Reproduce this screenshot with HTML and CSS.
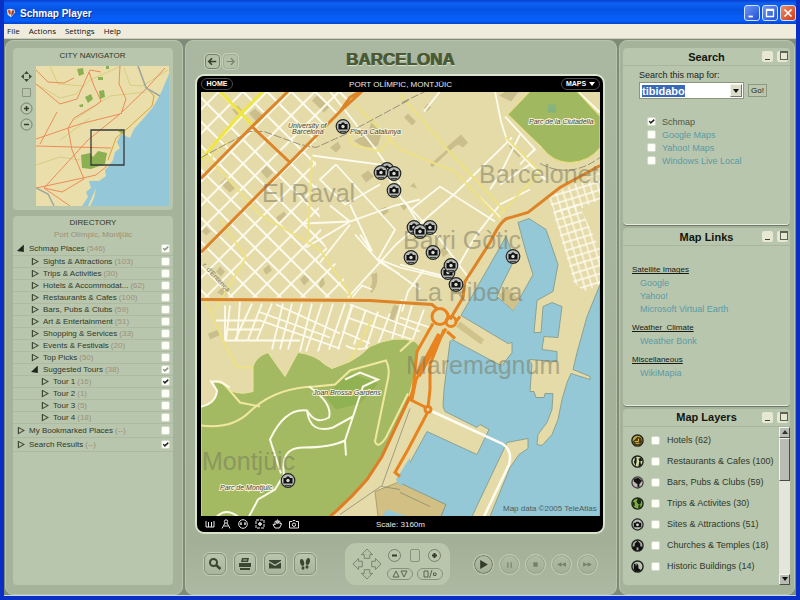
FILE: index.html
```
<!DOCTYPE html>
<html lang="en">
<head>
    <meta charset="UTF-8">
    <title>Schmap Player</title>
    <meta name="viewport" content="width=device-width, initial-scale=1">
    <link rel="stylesheet" href="styles.css">
</head>
<body>
    <header class="titlebar">
        <svg class="app-icon" viewBox="0 0 12 12"><path d="M1 2L5 1L10 2L11 5L6 11L2 8Z" fill="#f3e9e2"/><path d="M2 3L5 2L6 7L4 8Z" fill="#c8452b"/><path d="M7 3L10 3L9 7L6 10Z" fill="#8d3a2c"/></svg>
        <h1>Schmap Player</h1>
        <div class="window-buttons">
            <button type="button" aria-label="Minimize"><svg viewBox="0 0 16 16"><path d="M4 11H9V13H4Z" fill="#fff"/></svg></button>
            <button type="button" aria-label="Maximize"><svg viewBox="0 0 16 16"><path d="M4 4H12V12H4Z M4 5H12" fill="none" stroke="#fff" stroke-width="1.5"/></svg></button>
            <button type="button" class="close" aria-label="Close"><svg viewBox="0 0 16 16"><path d="M4 4L12 12M12 4L4 12" stroke="#fff" stroke-width="2"/></svg></button>
        </div>
    </header>
    <nav class="menubar">
        <button type="button">File</button>
        <button type="button">Actions</button>
        <button type="button">Settings</button>
        <button type="button">Help</button>
    </nav>

    <main class="workspace">
        <aside class="panel left">
            <section class="box navigator">
                <h2>CITY NAVIGATOR</h2>
                <div class="nav-body">
                    <div class="nav-tools">
                        <button type="button" aria-label="Pan"><svg viewBox="0 0 13 13"><path d="M6.5 1L9 4H4ZM6.5 12L9 9H4ZM1 6.5L4 4V9ZM12 6.5L9 4V9Z" fill="#3f4a37"/><circle cx="6.500" cy="6.500" r="2.500" fill="#b8c6ad"/></svg></button>
                        <button type="button" aria-label="Fit"><svg viewBox="0 0 13 13"><path d="M2.500 2.500H10.500V10.500H2.500Z" fill="none" stroke="#8b9680"/></svg></button>
                        <button type="button" aria-label="Zoom in"><svg viewBox="0 0 13 13"><circle cx="6.500" cy="6.500" r="5.500" fill="#bcc9b1" stroke="#75806a"/><path d="M4 6.500H9M6.500 4V9" stroke="#323c2b" stroke-width="1.500"/></svg></button>
                        <button type="button" aria-label="Zoom out"><svg viewBox="0 0 13 13"><circle cx="6.500" cy="6.500" r="5.500" fill="#bcc9b1" stroke="#75806a"/><path d="M4 6.500H9" stroke="#323c2b" stroke-width="1.500"/></svg></button>
                    </div>
                    <svg class="minimap" viewBox="36 66 133 140">
                        <rect x="36" y="66" width="133" height="140" fill="#eadfaa"/>
                        <path d="M169 74L160 95L153 107L143 119L134 129L130 138L121 134L117 142L120 148L115 152L113 160L108 167L105 170L106 176L99 181L89 181L91 188L86 192L88 197L82 206H88L96 188L94 198L90 206H169Z" fill="#94c8d8"/>
                        <g fill="#8caf52">
                            <path d="M81 155L90 153L93 157L98 151L107 153L105 164L91 169L82 168Z"/>
                            <path d="M77 69L83 68L84 74L79 76ZM85 97L91 94L93 99L88 103ZM99 91L104 90L105 97L100 99ZM106 66H109V69H106ZM98 77H103V80H98ZM79 105L83 104V107H80ZM118 131L123 130L124 135Z"/>
                        </g>
                        <g fill="none" stroke="#c9bf68" opacity=".6">
                            <path d="M36 84L60 98L76 94L90 80L121 66M36 165L60 157L80 160M50 66L58 84L83 86M124 68L130 85L142 86L168 70M74 120L110 96L146 92M60 140L90 118"/>
                        </g>
                        <g fill="none" stroke="#ec8b58">
                            <path d="M36 139L80 124L120 114L147 88L165 68"/>
                            <path d="M44 188L88 140L120 114M36 146L111 148M36 188L83 178L96 175L107 166"/>
                            <path d="M36 84L60 104L77 99L90 70L101 72M70 206L44 188L62 192L84 179L72 150L68 128L74 118L96 105L101 101L94 86L89 72M40 144L57 112M120 66L119 84L126 99L121 114M36 70L48 82L64 83L74 78"/>
                            <path d="M138 66L146 87L154 96L152 106L128 128L116 138L108 160" stroke="#d9a33a"/>
                        </g>
                        <path d="M138 66L146 88L160 96M36 188L48 194L54 206" fill="none" stroke="#9ba8a0" stroke-width="1.500"/>
                        <path d="M91 130H124V165H91Z" fill="none" stroke="#35383a" stroke-width="1.300"/>
                    </svg>
                </div>
            </section>

            <section class="box directory">
                <h2>DIRECTORY</h2>
                <p class="place">Port Olímpic, Montjüic</p>
                <ul class="tree">
                    <li class="top first"><label><i class="open"></i>Schmap Places <span>(546)</span><input type="checkbox" class="dim" checked></label></li>
                    <li class="sub"><label><i></i>Sights &amp; Attractions <span>(103)</span><input type="checkbox"></label></li>
                    <li class="sub"><label><i></i>Trips &amp; Activities <span>(30)</span><input type="checkbox"></label></li>
                    <li class="sub"><label><i></i>Hotels &amp; Accommodat... <span>(62)</span><input type="checkbox"></label></li>
                    <li class="sub"><label><i></i>Restaurants &amp; Cafes <span>(100)</span><input type="checkbox"></label></li>
                    <li class="sub"><label><i></i>Bars, Pubs &amp; Clubs <span>(59)</span><input type="checkbox"></label></li>
                    <li class="sub"><label><i></i>Art &amp; Entertainment <span>(51)</span><input type="checkbox"></label></li>
                    <li class="sub"><label><i></i>Shopping &amp; Services <span>(33)</span><input type="checkbox"></label></li>
                    <li class="sub"><label><i></i>Events &amp; Festivals <span>(20)</span><input type="checkbox"></label></li>
                    <li class="sub"><label><i></i>Top Picks <span>(50)</span><input type="checkbox"></label></li>
                    <li class="sub"><label><i class="open"></i>Suggested Tours <span>(38)</span><input type="checkbox" class="dim" checked></label></li>
                    <li class="tour"><label><i></i>Tour 1 <span>(16)</span><input type="checkbox" checked></label></li>
                    <li class="tour"><label><i></i>Tour 2 <span>(1)</span><input type="checkbox"></label></li>
                    <li class="tour"><label><i></i>Tour 3 <span>(5)</span><input type="checkbox"></label></li>
                    <li class="tour"><label><i></i>Tour 4 <span>(18)</span><input type="checkbox"></label></li>
                    <li class="top"><label><i></i>My Bookmarked Places <span>(--)</span><input type="checkbox"></label></li>
                    <li class="top"><label><i></i>Search Results <span>(--)</span><input type="checkbox" checked></label></li>
                </ul>
            </section>
        </aside>

        <section class="panel center">
            <div class="city-bar">
                <div class="history">
                    <button type="button" aria-label="Back"><svg viewBox="0 0 14 14"><path d="M11 7H3M6.500 3.500L3 7L6.500 10.500" fill="none" stroke="#35402c" stroke-width="1.700"/></svg></button>
                    <button type="button" class="off" aria-label="Forward"><svg viewBox="0 0 14 14"><path d="M3 7H11M7.500 3.500L11 7L7.500 10.500" fill="none" stroke="#78846c" stroke-width="1.300"/></svg></button>
                </div>
                <h2>BARCELONA</h2>
            </div>

            <div class="map-frame">
                <div class="map-head">
                    <button type="button" class="pill">HOME</button>
                    <span>PORT OLÍMPIC, MONTJÜIC</span>
                    <button type="button" class="pill">MAPS <i></i></button>
                </div>
                <svg class="map" viewBox="201 92 399 425" preserveAspectRatio="xMidYMid slice">
                    <defs>
                        <pattern id="blocks" width="17" height="17" patternUnits="userSpaceOnUse" patternTransform="translate(255 295) rotate(45)">
                            <path d="M1 0V17M0 1H17" stroke="#fdfbee" stroke-width="1.900"/>
                        </pattern>
                        <pattern id="blocks-small" width="7" height="8" patternUnits="userSpaceOnUse" patternTransform="translate(560 210) rotate(-17)">
                            <path d="M1 0V8M0 1H7" stroke="#fdfbee" stroke-width="1.300"/>
                        </pattern>
                        <g id="pin">
                            <circle r="6.800" fill="#b9bcb8" stroke="#222622" stroke-width="1.200"/>
                            <path d="M-4.500 -2.500H-2L-1 -4H1L2 -2.500H4.500V3H-4.500Z" fill="#111"/>
                            <circle r="1.700" fill="#d8dad6"/>
                            <path d="M-3 5H3" stroke="#444" stroke-width="1.200"/>
                        </g>
                    </defs>
                    <rect x="201" y="92" width="399" height="425" fill="#e5dba9"/>

                    <!-- building blocks -->
                    <g fill="#cabf8c">
                        <path d="M249 114L255 109L266 119L259 125ZM312 101L317 96L330 107L324 113ZM260 171L266 166L273 173L267 179ZM220 184L226 178L236 188L230 193ZM232 110L238 106L242 111L237 116ZM354 141Q366 152 378 146L382 132L372 120L368 134ZM361 176L368 171L374 177L366 183ZM276 218L284 212L287 216L279 223ZM263 270L269 265L272 271L266 275ZM300 280L306 274L310 280L304 286ZM216 272L220 267L225 272L221 277ZM217 293L222 288L228 293L224 297ZM208 334L219 330L221 335L210 340ZM202 232L206 227L211 232L206 236Z"/>
                        <path d="M404 118L408 114L416 122L412 126ZM424 108L428 104L431 108L427 112ZM446 148L461 135L468 143L463 148L458 145L449 152ZM430 165L447 150L449 152L432 168ZM499 96L506 92H519L511 102ZM511 144L522 155L519 158L509 147ZM410 187L414 183L417 189ZM388 320L394 305L399 307L393 323ZM371 275L377 273Q379 287 371 294L370 289Q374 281 371 275ZM330 148L338 142L341 148L336 153ZM440 250L446 247L449 253L443 258ZM400 206L405 202L408 207L404 211ZM319 284L323 277L325 284L320 290ZM380 210L386 207L389 212L383 216Z"/>
                    </g>

                    <!-- streets -->
                    <path d="M201 92H352L336 116L316 136V180L322 240L348 287V298H201Z" fill="url(#blocks)"/>
                    <path d="M553 213L578 203L600 250V285L584 292L574 283Z" fill="url(#blocks-small)"/>
                    <path d="M548 198L562 190L600 173V200L575 212L556 216Z" fill="url(#blocks-small)"/>
                    <g fill="none" stroke="#fdfbee" stroke-width="1.800">
                        <path d="M312 156L380 165L402 200L440 240L470 280M330 92L376 150L400 185M336 165L320 180L345 205L380 185M336 165L395 230L378 260L420 290M304 224L350 222L395 206L420 200M350 222L330 206M350 222L306 248M350 205L372 252M355 235L379 262L400 275M320 263L350 225M372 252L360 235M379 260L400 268L470 285"/>
                        <path d="M348 298L396 245L455 194L512 138M372 290L362 286L352 298M440 92L424 112M495 92L501 122L507 141L546 180M505 117L535 150L524 160M510 114L542 148M520 135L500 175L490 190M534 150L520 165M480 198L500 218M500 185L530 165L545 180M400 265L425 272L450 278M411 210L440 187L495 222M403 200L424 232M455 272L476 236L500 205L530 190M545 120L558 112M578 92L600 113"/>
                        <path d="M230 306L226 341H300M240 302L237 341M252 304L235 341M262 304L248 340M272 304L257 340M283 304L272 350M292 304L280 350M302 304L288 350M312 304L300 352M322 304L306 352M333 304L318 352M345 304L329 350M353 305L338 350M216 321H260L340 349M228 330H262M258 312L330 338M276 305L340 334M225 306V341"/>
                        <path d="M350 305L420 332M347 318L412 340M342 332L370 344M346 346Q355 352 368 348M352 305L344 330M366 310L354 345M378 312L366 348M390 314L378 345M402 300L392 340M412 306L402 339M424 310L412 342M400 318L430 328"/>
                        <path d="M402 312L408 292L424 270"/>
                    </g>
                    <g fill="none" stroke="#efe23c" stroke-width="3">
                        <path d="M220 92L252 125M201 160L240 115L263 92" stroke="#f0e640"/>
                    </g>
                    <g fill="none" stroke="#ede182" stroke-width="2">
                        <path d="M355 105L400 150L455 172L500 220M312 156L308 240M201 150L260 215L320 250L352 298M400 95L450 153L505 212M345 120L352 145L380 152L398 130M201 168L230 140M506 138L540 172L500 215M206 302L225 345L237 368H253M214 312L246 258L220 220M350 362L372 320"/>
                    </g>

                    <!-- parks -->
                    <path d="M530 92L508 115L542 148Q553 163 570 163Q590 162 600 148V117L577 92Z" fill="#a0b961" stroke="#e9df72"/>
                    <path d="M548 105H556V113H548Z" fill="#85b380"/>
                    <path d="M253 392V367Q256 357 268 353L285 377L298 353Q315 355 325 365L332 369L350 362Q360 357 370 347Q395 335 415 342L420 347L412 385L408 400L382 457Q370 480 330 517H201V408Q216 402 217 392L213 382L222 384Q234 398 253 392Z" fill="#a3ba63" stroke="#ece3a0"/>
                    <path d="M324 396L345 378L352 374L378 384L360 404L336 410Z" fill="#91b253"/>

                    <g fill="none" stroke="#f2e7a0" stroke-width="2">
                        <path d="M201 426Q232 430 250 412Q275 388 315 387L335 385L350 371L386 361Q391 370 387 384L375 442Q378 450 386 438L408 394"/>
                        <path d="M222 382L240 403L260 407"/>
                        <path d="M413 340L400 352"/>
                    </g>
                    <g fill="none" stroke="#fcfbe9" stroke-width="2">
                        <path d="M309 387Q333 404 329 418Q316 426 307 411Q285 408 270 440L281 474M307 411Q310 435 333 428L353 417L363 387L378 380L360 373L345 380M353 417L345 441L346 456M345 441Q331 448 303 448Q280 448 284 475L275 490L258 500L249 517M217 517Q226 508 238 517"/>
                        <path d="M201 407Q216 404 217 391L211 382L220 382L230 388"/>
                    </g>

                    <!-- harbour -->
                    <path d="M375 492L400 482L446 505L441 517H378Z" fill="#d1bf84" stroke="#9b8c5a" stroke-width=".7"/>
                    <path d="M506 237L461 316L508 344L512 343L512 353L502 366L497 364L452 340L450 342L444 390L443 407L445 412L477 428L480 425L489 430L477 455L427 432L399 483L446 505L441 517H472L507 443L528 439L528 449L519 455L510 468L490 517H600V285L587 317L577 353L573 370L590 377L590 380L571 374L567 383L562 400L558 420L552 435L542 446L537 445L538 435L547 423L552 410L553 394H545L544 398H536L534 392H530L532 365L529 360L557 362V352L542 350L544 337L558 338L562 307L552 303L543 307L541 333H534L537 301L553 292L558 265L546 230L529 219L518 223L526 253L533 275L513 311L497 297L502 285L513 263L512 253Z" fill="#94c8d6" stroke="#7f9685" stroke-width=".8"/>
                    <path d="M387 510L382 517H407ZM400 487L396 480L410 458V474Z" fill="#94c8d6"/>
                    <path d="M513 311L498 296L508 289L520 301ZM456 327L460 322L484 340L481 345Z" fill="#cfc28a"/>
                    <path d="M400 493L430 507M340 515L382 486L410 409M382 487L400 490" fill="none" stroke="#8d8a74" stroke-width=".8"/>
                    <path d="M428 410L502 444Q513 451 509 465L484 517" fill="none" stroke="#fffdf2" stroke-width="2.500"/>

                    <!-- rail lines -->
                    <path d="M201 158L250 132L264 132L300 145L316 148L345 135L410 100M540 164Q570 180 600 158M402 103L425 92" fill="none" stroke="#98917a" stroke-dasharray="8 2"/>

                    <!-- main roads -->
                    <g fill="none" stroke="#dc8427" stroke-width="3">
                        <path d="M201 179L252 127L288 92M201 253L290 163L340 112L362 92M252 127L290 163M340 112L350 98L360 92"/>
                        <path d="M201 300L370 301L400 303L432 305L438 310"/>
                        <path d="M600 166L560 188L528 213L507 219Q500 222 490 243L465 282L463 298L450 320"/>
                        <path d="M410 397L382 457L367 480Q350 500 330 517" stroke="#df7d25"/>
                    </g>
                    <g fill="none" stroke="#e8841f" stroke-width="3">
                        <circle cx="440" cy="317" r="8"/>
                        <circle cx="451" cy="322" r="5"/>
                        <path d="M433 324L417 352L413 390L410 400L428 409M446 329L416 380L412 400M444 330L430 365V390L428 408M447 332L455 339M456 322L460 317"/>
                        <path d="M440 335L418 376" stroke-width="6"/>
                        <circle cx="428" cy="410" r="3" fill="#e9dcae"/>
                        <path d="M427 414L408 450L395 473L400 477"/>
                    </g>

                    <g class="area-names">
                        <text x="262" y="202">El Raval</text>
                        <text x="479" y="183">Barcelonet</text>
                        <text x="403" y="249">Barri Gòtic</text>
                        <text x="414" y="301">La Ribera</text>
                        <text x="406" y="374">Maremagnum</text>
                        <text x="202" y="470">Montjüic</text>
                    </g>
                    <g class="spot-names">
                        <text x="288" y="128">University of</text>
                        <text x="292" y="134">Barcelona</text>
                        <text x="350" y="134">Plaça Catalunya</text>
                        <text x="529" y="124">Parc de la Ciutadella</text>
                        <text x="313" y="395">Joan Brossa Gardens</text>
                        <text x="220" y="490">Parc de Montjuïc</text>
                    </g>
                    <text class="street" transform="translate(202 266) rotate(47)">r. d'Entença</text>
                    <text class="credit" x="503" y="511">Map data ©2005 TeleAtlas</text>

                    <use href="#pin" x="343" y="127"/>
                    <use href="#pin" x="387" y="170"/>
                    <use href="#pin" x="394" y="174"/>
                    <use href="#pin" x="381" y="173"/>
                    <use href="#pin" x="394" y="191"/>
                    <use href="#pin" x="414" y="228"/>
                    <use href="#pin" x="430" y="228"/>
                    <use href="#pin" x="420" y="232"/>
                    <use href="#pin" x="411" y="258"/>
                    <use href="#pin" x="433" y="253"/>
                    <use href="#pin" x="448" y="273"/>
                    <use href="#pin" x="451" y="266"/>
                    <use href="#pin" x="456" y="285"/>
                    <use href="#pin" x="513" y="257"/>
                    <use href="#pin" x="288" y="481"/>
                </svg>
                <div class="map-foot">
                    <div class="map-tools">
                        <button type="button" aria-label="Ruler"><svg viewBox="0 0 10 10"><path d="M1 2V8H9V2M3.500 3V8M6.500 3V8"/></svg></button>
                        <button type="button" aria-label="Walk"><svg viewBox="0 0 10 10"><path d="M1 9.500L4 4M9 9.500L6 4M3 7H7"/><circle cx="5" cy="2.500" r="1.700"/></svg></button>
                        <button type="button" aria-label="Scale"><svg viewBox="0 0 10 10"><circle cx="5" cy="5" r="4.300"/><path d="M2 5H4M6 5H8M3 3V6M7 3V6"/></svg></button>
                        <button type="button" aria-label="Center"><svg viewBox="0 0 10 10"><path d="M1 1H9V9H1Z" stroke-dasharray="3 1"/><path d="M5 3V7M3 5H7" stroke-width="1.500"/></svg></button>
                        <button type="button" aria-label="Drag"><svg viewBox="0 0 10 10"><path d="M3 9L1 5.500L2.500 5L3 6V2.500L4 2L5 4.500V1L6 1V4.500L7 2L8 2.500V5L9 4L9.500 5L7.500 9Z"/></svg></button>
                        <button type="button" aria-label="Snapshot"><svg viewBox="0 0 10 10"><path d="M.5 2.500H3L4 1.500H6L7 2.500H9.500V9H.5Z"/><circle cx="5" cy="5.700" r="1.700"/></svg></button>
                    </div>
                    <span>Scale: 3160m</span>
                </div>
            </div>

            <div class="controls">
                <div class="actions">
                    <button type="button" aria-label="Find"><svg viewBox="0 0 14 14"><circle cx="5.500" cy="5.500" r="3.500" fill="none" stroke="#3c4733" stroke-width="2"/><path d="M8 8L12.500 12" stroke="#3c4733" stroke-width="2.500"/></svg></button>
                    <button type="button" aria-label="Print"><svg viewBox="0 0 14 14" fill="#3c4733"><path d="M4 1H11L10 5H3ZM1 6H13V10H1ZM2 11H12V13H2Z"/><path d="M5 3H9" stroke="#b5c2a8"/></svg></button>
                    <button type="button" aria-label="Mail"><svg viewBox="0 0 14 14" fill="#3c4733"><path d="M1 3H13V4L7 7.500L1 4ZM1 5.500L7 9L13 5.500V11.500H1Z"/></svg></button>
                    <button type="button" aria-label="Tours"><svg viewBox="0 0 14 14" fill="#3c4733"><ellipse cx="4" cy="5.500" rx="2" ry="3.500" transform="rotate(-12 4 5)"/><ellipse cx="5" cy="11" rx="1.500" ry="1.800"/><ellipse cx="10" cy="4.500" rx="2" ry="3.500" transform="rotate(12 10 4)"/><ellipse cx="9" cy="10" rx="1.500" ry="1.800"/></svg></button>
                </div>
                <div class="pan-zoom">
                    <button type="button" aria-label="Pan map"><svg class="pan" viewBox="0 0 32 34" fill="#b5c2a8" stroke="#768269"><path d="M16 1L22 7H19V11H13V7H10Z"/><path d="M16 33L22 27H19V23H13V27H10Z"/><path d="M1 17L7 11V14H11V20H7V23Z"/><path d="M31 17L25 11V14H21V20H25V23Z"/></svg></button>
                    <div class="zoom">
                        <button type="button" class="round" aria-label="Zoom out"><svg viewBox="0 0 11 11"><path d="M3 5.500H8"/></svg></button>
                        <span class="level"></span>
                        <button type="button" class="round" aria-label="Zoom in"><svg viewBox="0 0 11 11"><path d="M3 5.500H8M5.500 3V8"/></svg></button>
                        <button type="button" class="oval" aria-label="Tilt"><svg viewBox="0 0 16 8"><path d="M1 7L4 1L7 7ZM9 1H15L12 7Z"/></svg></button>
                        <button type="button" class="oval" aria-label="View mode"><svg viewBox="0 0 16 8"><path d="M2 1H6V7H2ZM7.500 8L10 0M11.500 3H14V5.500H11.500Z"/></svg></button>
                    </div>
                </div>
                <div class="player">
                    <button type="button" class="play" aria-label="Play"><svg viewBox="0 0 10 10"><path d="M2 1L9 5L2 9Z"/></svg></button>
                    <button type="button" aria-label="Pause"><svg viewBox="0 0 10 10"><path d="M3 3H4V8H3ZM6 3H7V8H6Z"/></svg></button>
                    <button type="button" aria-label="Stop"><svg viewBox="0 0 10 10"><path d="M3 3H7V7H3Z"/></svg></button>
                    <button type="button" aria-label="Rewind"><svg viewBox="0 0 10 10"><path d="M5 3V7L1 5ZM9 3V7L5 5Z"/></svg></button>
                    <button type="button" aria-label="Forward"><svg viewBox="0 0 10 10"><path d="M1 3V7L5 5ZM5 3V7L9 5Z"/></svg></button>
                </div>
            </div>
        </section>

        <aside class="panel right">
            <section class="box module">
                <div class="module-head">
                    <h2>Search</h2>
                    <button type="button" class="min" aria-label="Minimize Search"></button>
                    <button type="button" class="max" aria-label="Maximize Search"></button>
                </div>
                <form class="search">
                    <label for="query">Search this map for:</label>
                    <div class="query-row">
                        <div class="combo">
                            <input type="text" id="query" value="tibidabo">
                            <button type="button" aria-label="Recent searches"><i></i></button>
                        </div>
                        <button type="submit" class="go">Go!</button>
                    </div>
                    <div class="engines">
                        <label><input type="checkbox" checked>Schmap</label>
                        <label class="ext"><input type="checkbox">Google Maps</label>
                        <label class="ext"><input type="checkbox">Yahoo! Maps</label>
                        <label class="ext"><input type="checkbox">Windows Live Local</label>
                    </div>
                </form>
            </section>

            <section class="box module">
                <div class="module-head">
                    <h2>Map Links</h2>
                    <button type="button" class="min" aria-label="Minimize Map Links"></button>
                    <button type="button" class="max" aria-label="Maximize Map Links"></button>
                </div>
                <div class="links">
                    <h3>Satellite Images</h3>
                    <a href="#">Google</a>
                    <a href="#">Yahoo!</a>
                    <a href="#">Microsoft Virtual Earth</a>
                    <h3>Weather&nbsp; Climate</h3>
                    <a href="#">Weather Bonk</a>
                    <h3>Miscellaneous</h3>
                    <a href="#">WikiMapia</a>
                </div>
            </section>

            <section class="box module">
                <div class="module-head">
                    <h2>Map Layers</h2>
                    <button type="button" class="min" aria-label="Minimize Map Layers"></button>
                    <button type="button" class="max" aria-label="Maximize Map Layers"></button>
                </div>
                <div class="layers">
                    <div class="layer-list">
                        <label><svg viewBox="0 0 14 14"><circle cx="7" cy="7" r="6" fill="#c9a93e" stroke="#1e211b" stroke-width="1.500"/><path d="M2 8L7 3L11 4L12 9L9 12H4Z" fill="#4a3b12"/><path d="M4 8H8V5M5 10H9" stroke="#e5c95a" fill="none"/></svg><input type="checkbox">Hotels (62)</label>
                        <label><svg viewBox="0 0 14 14"><circle cx="7" cy="7" r="6" fill="#cfdba8" stroke="#1e211b" stroke-width="1.500"/><path d="M4 2V6L3 7L5 12L6 7V3ZM8 4L11 3L12 6L10 7L11 11L8 12L9 7Z" fill="#15180f"/></svg><input type="checkbox">Restaurants &amp; Cafes (100)</label>
                        <label><svg viewBox="0 0 14 14"><circle cx="7" cy="7" r="6" fill="#c3b6bb" stroke="#3a3a36" stroke-width="1.300"/><path d="M3 3L8 2L12 5L9 9V12H7V9L3 6Z" fill="#161616"/></svg><input type="checkbox">Bars, Pubs &amp; Clubs (59)</label>
                        <label><svg viewBox="0 0 14 14"><circle cx="7" cy="7" r="6" fill="#7fae45" stroke="#1e211b" stroke-width="1.500"/><path d="M7 2Q11 2 11 5L10 8H8L6 5ZM8 9H10V11L8 12ZM2 5L4 6L4 10L2 9Z" fill="#1a2a10"/></svg><input type="checkbox">Trips &amp; Activites (30)</label>
                        <label><svg viewBox="0 0 14 14"><circle cx="7" cy="7" r="6" fill="#b9bcb8" stroke="#1e211b" stroke-width="1.300"/><path d="M3 5H5L6 4H8L9 5H11V10H3Z" fill="#111"/><circle cx="7" cy="7.300" r="1.500" fill="#d8dad6"/></svg><input type="checkbox">Sites &amp; Attractions (51)</label>
                        <label><svg viewBox="0 0 14 14"><circle cx="7" cy="7" r="6" fill="#a9aca3" stroke="#1e211b" stroke-width="1.500"/><path d="M7 2L10 5V8H12V11L7 13L2 11V8H4V5Z" fill="#111"/><path d="M6 9H8V12H6Z" fill="#a9aca3"/></svg><input type="checkbox">Churches &amp; Temples (18)</label>
                        <label><svg viewBox="0 0 14 14"><circle cx="7" cy="7" r="6" fill="#b9c4ae" stroke="#1e211b" stroke-width="1.500"/><path d="M3 4H5V6H6V3L8 6V9L11 11L7 13L3 11Z" fill="#111"/></svg><input type="checkbox">Historic Buildings (14)</label>
                    </div>
                    <div class="scrollbar">
                        <button type="button" aria-label="Scroll up"><i class="up"></i></button>
                        <span class="thumb"></span>
                        <button type="button" class="down-button" aria-label="Scroll down"><i></i></button>
                    </div>
                </div>
            </section>
        </aside>
    </main>
    <script>
        const query = document.getElementById('query');
        query.focus();
        query.select();
    </script>
</body>
</html>
```

FILE: styles.css
```
* {
    box-sizing: border-box;
}
body {
    margin: 0;
    height: 100vh;
    display: flex;
    flex-direction: column;
    font-family: "Liberation Sans", Arial, sans-serif;
    font-size: 8px;
    color: #2f382a;
    background: #0a2fc4;
    border: solid #0a2fc4;
    border-width: 0 4px 4px 4px;
    overflow: hidden;
}
h1, h2, h3, p, ul {
    margin: 0;
    padding: 0;
}
button {
    font-family: inherit;
    font-size: inherit;
    color: inherit;
    background: none;
    border: none;
    padding: 0;
    margin: 0;
}
svg {
    display: block;
}

/* window */
.titlebar {
    display: flex;
    align-items: center;
    gap: 4px;
    height: 24px;
    flex: none;
    margin: 0 -4px;
    padding: 2px 4px 0 6px;
    background: linear-gradient(#0a3fd0, #0c62f4 15%, #0553e4 40%, #0660fb 85%, #0444cc);
}
.app-icon {
    width: 10px;
    height: 12px;
}
.titlebar h1 {
    flex: 1;
    color: #fff;
    font-size: 10px;
    text-shadow: 1px 1px #0b2a86;
}
.window-buttons {
    display: flex;
    gap: 2px;
}
.window-buttons button {
    width: 16px;
    height: 16px;
    border: 1px solid #d6e2fb;
    border-radius: 3px;
    background: linear-gradient(135deg, #6c94f2, #2251d4);
}
.window-buttons .close {
    background: linear-gradient(135deg, #ec8c6a, #cf3c14);
}
.menubar {
    display: flex;
    gap: 9px;
    height: 15px;
    flex: none;
    padding: 0 3px 2px;
    background: #efecdd;
    border-bottom: 1px solid #d0cdbc;
    font-family: "Open Sans", "Noto Sans", sans-serif;
    color: #111;
}
.workspace {
    flex: 1;
    min-height: 0;
    display: flex;
    gap: 2px;
    padding: 1px 1px 0;
    background: #7d8b78;
    border-bottom: 1px solid #c8d6e8;
}
.panel {
    border-radius: 8px;
    background: #a6b39b;
    border: 1px solid #b7c3ad;
    display: flex;
    flex-direction: column;
}
.left {
    width: 178px;
    flex: none;
    padding: 7px 9px 9px 7px;
    gap: 6px;
}
.center {
    flex: 1;
    min-width: 0;
    padding: 10px 11px 8px 9px;
    background: linear-gradient(#aab8a2, #a3af97 90%, #adb9a2);
}
.right {
    width: 176px;
    flex: none;
    padding: 7px 4px 9px 3px;
    gap: 3px;
}
.box {
    background: #b8c6ad;
    border-radius: 4px;
}
.box h2 {
    font-weight: normal;
    font-size: 8px;
    line-height: 10px;
    text-align: center;
}

/* check boxes */
input[type="checkbox"] {
    appearance: none;
    width: 9px;
    height: 9px;
    flex: none;
    margin: 0;
    background: #fdfff8;
    border: 1px solid #d2dbc9;
    border-radius: 2px;
}
input[type="checkbox"]:checked::after {
    content: "";
    display: block;
    width: 7px;
    height: 7px;
    background: #222;
    clip-path: polygon(10% 50%, 25% 40%, 40% 55%, 85% 15%, 95% 35%, 40% 85%);
}
input.dim:checked::after {
    background: #8d9485;
}

/* city navigator */
.navigator {
    padding: 3px 4px 4px 7px;
}
.navigator h2 {
    margin-bottom: 5px;
    padding-right: 4px;
}
.nav-body {
    display: flex;
    gap: 3px;
}
.nav-tools {
    display: flex;
    flex-direction: column;
    gap: 3px;
    padding-top: 4px;
}
.nav-tools svg {
    width: 13px;
    height: 13px;
}
.minimap {
    flex: 1;
    min-width: 0;
}

/* directory */
.directory {
    flex: 1;
    min-height: 0;
    padding-top: 2px;
}
.place {
    text-align: center;
    line-height: 10px;
    margin: 2px 0;
    color: #a08f72;
}
.tree {
    list-style: none;
}
.tree label {
    display: flex;
    align-items: center;
    gap: 2px;
    height: 12px;
    padding-right: 3px;
    border-bottom: 1px solid #adba9f;
}
.tree .top label {
    height: 14px;
    padding-left: 4px;
}
.tree .sub label {
    padding-left: 18px;
}
.tree .tour label {
    padding-left: 28px;
}
.tree span {
    color: #9c9179;
}
.tree input {
    margin-left: auto;
}
.tree i {
    width: 8px;
    height: 8px;
    margin-right: 2px;
    background: #3f4a37;
    clip-path: polygon(10% 0, 100% 50%, 10% 100%, 10% 0, 25% 22%, 25% 78%, 74% 50%, 25% 22%);
}
.tree i.open {
    background: #1f261b;
    clip-path: polygon(0 80%, 85% 0, 85% 95%);
}

/* map */
.city-bar {
    display: grid;
    grid-template-columns: 1fr auto 1fr;
    align-items: center;
    height: 18px;
    margin-bottom: 5px;
}
.city-bar h2 {
    font-size: 17px;
    line-height: 18px;
    color: #4b5a35;
    text-shadow: 1px 0 #4b5a35, 1px 1px 1px #dde5d2;
}
.history {
    display: flex;
    gap: 3px;
    padding: 3px 0 0 10px;
}
.history button {
    width: 15px;
    height: 15px;
    border: 1px solid #74806a;
    border-radius: 4px;
    background: #b4c1a7;
    box-shadow: 0 0 0 1px #c4d0b8;
}
.history .off {
    border-color: #a0ac94;
}
.map-frame {
    flex: 1;
    min-height: 0;
    display: flex;
    flex-direction: column;
    background: #000;
    border: 2px solid #d9e4cd;
    border-radius: 9px;
    padding: 0 3px 0 4px;
    color: #e8e8e8;
}
.map-head {
    display: grid;
    grid-template-columns: 1fr auto 1fr;
    align-items: center;
    height: 16px;
    flex: none;
}
.pill {
    width: 32px;
    height: 12px;
    border: 1px solid #4c4c4c;
    border-radius: 6px;
    font-size: 7px;
    font-weight: bold;
    line-height: 10px;
    color: #fff;
}
.pill:last-child {
    width: 39px;
    justify-self: end;
}
.pill i {
    display: inline-block;
    border: solid transparent;
    border-width: 4px 3px 0;
    border-top-color: #fff;
    margin-left: 1px;
}
.map {
    width: 100%;
    flex: 1;
    min-height: 0;
}
.area-names {
    font-size: 25px;
    fill: #77755c;
    opacity: .5;
}
.spot-names {
    font-size: 7px;
    font-style: italic;
    fill: #45463a;
    stroke: #f3efcf;
    stroke-width: 2px;
    paint-order: stroke;
}
.street {
    font-size: 7px;
    fill: #7c7860;
}
.credit {
    font-size: 8px;
    fill: #4d5d5c;
}
.map-foot {
    display: grid;
    grid-template-columns: 1fr auto 1fr;
    align-items: center;
    height: 16px;
    flex: none;
}
.map-tools {
    display: flex;
    gap: 6px;
    padding-left: 4px;
}
.map-tools svg {
    width: 10px;
    height: 10px;
    fill: none;
    stroke: #e6e6e6;
}
.map-tools button + button {
    width: 11px;
}

/* bottom controls */
.controls {
    display: flex;
    align-items: center;
    justify-content: space-between;
    height: 44px;
    margin-top: 8px;
    padding: 0 7px 0 9px;
}
.actions {
    display: flex;
    gap: 8px;
}
.actions button {
    width: 22px;
    height: 22px;
    padding: 3px;
    border: 1px solid #85917a;
    border-radius: 6px;
    background: linear-gradient(#bac7ad, #a9b59d);
    box-shadow: 0 0 0 1px #c2cdb7;
}
.pan-zoom {
    display: flex;
    align-items: center;
    gap: 5px;
    height: 42px;
    padding: 0 7px;
    margin-left: 5px;
    border-radius: 11px;
    background: #b9c6ac;
}
.pan {
    width: 30px;
    height: 32px;
}
.zoom {
    display: grid;
    grid-template-columns: repeat(6, 1fr);
    gap: 6px 4px;
    justify-items: center;
    align-items: center;
}
.round {
    grid-column: span 2;
    width: 13px;
    height: 13px;
    border: 1px solid #75816a;
    border-radius: 50%;
}
.round svg {
    stroke: #333d2a;
    stroke-width: 2;
}
.level {
    grid-column: span 2;
    width: 10px;
    height: 13px;
    border: 1px solid #87937b;
    border-radius: 2px;
}
.oval {
    grid-column: span 3;
    width: 26px;
    height: 12px;
    padding: 1px 4px;
    border: 1px solid #87937b;
    border-radius: 6px;
}
.oval svg {
    fill: none;
    stroke: #58644d;
}
.player {
    display: flex;
    gap: 5px;
}
.player button {
    width: 21px;
    height: 21px;
    padding: 4px;
    border: 1px solid #c6d1bb;
    border-radius: 50%;
    background: linear-gradient(#b1bda5, #a2ae96);
    box-shadow: inset 0 0 0 1px #98a48c;
}
.player svg {
    fill: #75806a;
}
.player .play {
    box-shadow: inset 0 0 0 1px #6c785f;
}
.play svg {
    fill: #333d2a;
}

/* right modules */
.module {
    flex: 1 1 0;
    min-height: 0;
    display: flex;
    flex-direction: column;
    border-bottom: 1px solid #e6ecdf;
    box-shadow: 0 1px #6d7965;
}
.module:last-child {
    border-bottom: none;
    box-shadow: none;
}
.module-head {
    display: grid;
    grid-template-columns: 1fr 11px 11px;
    align-items: center;
    column-gap: 4px;
    height: 18px;
    flex: none;
    padding-right: 2px;
    border-bottom: 1px solid #a9b69d;
}
.module-head h2 {
    font-size: 11px;
    font-weight: bold;
    line-height: 14px;
    color: #121510;
    padding-left: 32px;
}
.min, .max {
    position: relative;
    width: 11px;
    height: 11px;
    background: #e6e8d2;
    border-radius: 2px;
}
.min::after, .max::after {
    content: "";
    position: absolute;
    left: 3px;
    bottom: 2px;
    width: 5px;
    height: 1px;
    background: #3c4235;
}
.max::after {
    height: 6px;
    width: 6px;
    background: none;
    border: 1px solid #5c6254;
    border-top-width: 2px;
}
.search {
    padding: 4px 8px 0 16px;
    font-size: 9px;
    color: #1f241c;
}
.search > label {
    display: block;
    line-height: 11px;
    margin-bottom: 1px;
}
.query-row {
    display: flex;
    align-items: center;
    gap: 4px;
}
.combo {
    display: flex;
    width: 105px;
    height: 17px;
    padding: 1px;
    background: #fff;
    border: 1px solid #8f947f;
}
.combo input {
    flex: 1;
    min-width: 0;
    border: none;
    outline: none;
    padding: 0 1px;
    font: bold 11px "Liberation Sans", Arial, sans-serif;
}
.combo input::selection {
    background: #3a68b8;
    color: #fff;
}
.combo button {
    width: 12px;
    background: #dcdccb;
    border: 1px solid;
    border-color: #f5f5ec #77776a #77776a #f5f5ec;
}
.combo i, .scrollbar i {
    display: block;
    width: 0;
    margin: 0 auto;
    border: solid transparent;
    border-width: 4px 3px 0;
    border-top-color: #111;
}
.go {
    width: 19px;
    height: 13px;
    font-size: 8px;
    border: 1px solid #8d9980;
    background: #bcc7ae;
}
.engines {
    display: flex;
    flex-direction: column;
    gap: 2px;
    padding: 17px 0 0 8px;
}
.engines label {
    display: flex;
    align-items: center;
    gap: 6px;
    height: 11px;
    color: #4f5949;
}
.engines .ext {
    color: #5a9ba6;
}
.links {
    display: flex;
    flex-direction: column;
    padding: 12px 9px 0;
    font-size: 9px;
    line-height: 13px;
}
.links h3 {
    font-size: 8px;
    font-weight: normal;
    text-decoration: underline;
    color: #161a13;
    margin-top: 5px;
}
.links h3 + a {
    margin-top: 1px;
}
.links a {
    padding-left: 8px;
    color: #5a9ba6;
    text-decoration: none;
}
.layers {
    flex: 1;
    min-height: 0;
    display: flex;
    justify-content: space-between;
}
.layer-list {
    padding: 3px 0 0 8px;
    font-size: 9px;
}
.layer-list label {
    display: flex;
    align-items: center;
    gap: 7px;
    height: 21px;
    white-space: nowrap;
}
.layer-list svg {
    width: 13px;
    height: 13px;
}
.scrollbar {
    display: flex;
    flex-direction: column;
    width: 11px;
    background: #e4e6de;
}
.scrollbar button, .thumb {
    height: 11px;
    flex: none;
    background: #b9bcb4;
    border: 1px solid;
    border-color: #f2f3ee #4a4d45 #4a4d45 #f2f3ee;
}
.scrollbar .thumb {
    height: 43px;
}
.scrollbar .down-button {
    margin-top: auto;
}
.scrollbar i.up {
    border-width: 0 3px 4px;
    border-bottom-color: #333;
}
```
